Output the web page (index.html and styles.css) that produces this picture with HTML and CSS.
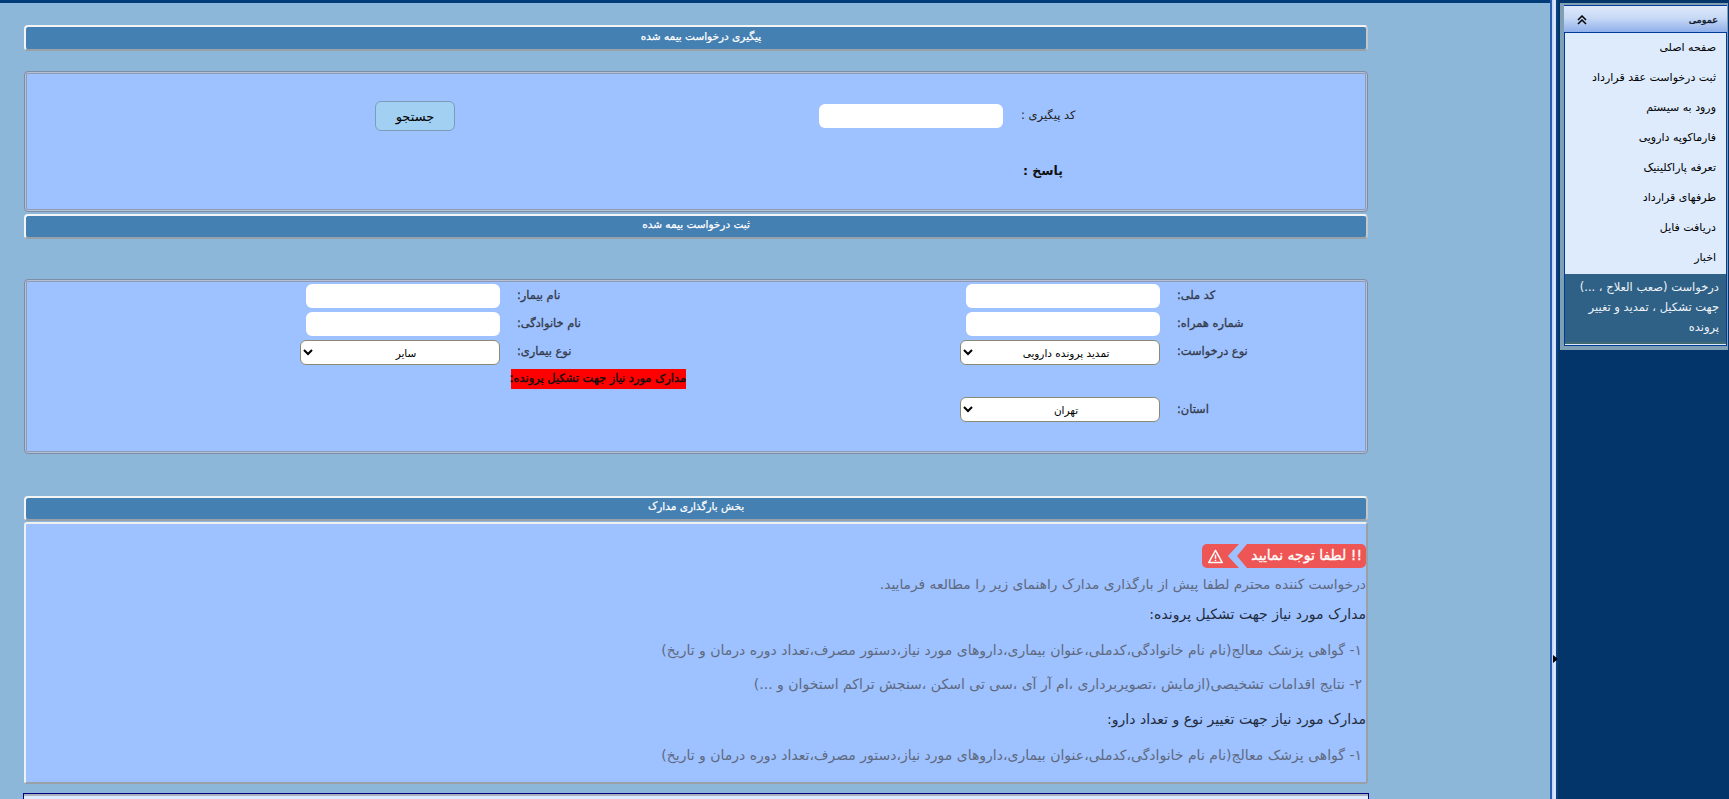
FILE: index.html
```html
<!DOCTYPE html>
<html lang="fa">
<head>
<meta charset="utf-8">
<title>درخواست بیمه شده</title>
<link rel="stylesheet" href="styles.css">
</head>
<body>
<div class="page">
  <main class="main">
    <div class="content">
      <div class="bar bar-first" dir="rtl">پیگیری درخواست بیمه شده</div>
      <section class="panel panel-track">
        <div class="track-row">
          <button class="btn-search" type="button" dir="rtl">جستجو</button>
          <input class="field field-track" type="text">
          <span class="track-label" dir="rtl">کد پیگیری :</span>
        </div>
        <div class="answer" dir="rtl">پاسخ :</div>
      </section>
      <div class="bar bar-second" dir="rtl">ثبت درخواست بیمه شده</div>
      <section class="panel panel-form">
        <input class="field cell-field" type="text">
        <label class="flabel" dir="rtl">نام بیمار:</label>
        <input class="field cell-field" type="text">
        <label class="flabel" dir="rtl">کد ملی:</label>

        <input class="field cell-field" type="text">
        <label class="flabel" dir="rtl">نام خانوادگی:</label>
        <input class="field cell-field" type="text">
        <label class="flabel" dir="rtl">شماره همراه:</label>

        <select class="pick" dir="rtl"><option>سایر</option></select>
        <label class="flabel" dir="rtl">نوع بیماری:</label>
        <select class="pick" dir="rtl"><option>تمدید پرونده دارویی</option></select>
        <label class="flabel" dir="rtl">نوع درخواست:</label>

        <span></span>
        <div class="red-wrap"><span class="red-note" dir="rtl">مدارک مورد نیاز جهت تشکیل پرونده:</span></div>
        <span></span>
        <span></span>

        <span></span>
        <span></span>
        <select class="pick pick-low" dir="rtl"><option>تهران</option></select>
        <label class="flabel flabel-low" dir="rtl">استان:</label>
      </section>
      <div class="bar bar-third" dir="rtl">بخش بارگذاری مدارک</div>
      <section class="panel-docs" dir="rtl">
        <div class="badge">
          <span class="badge-text">!! لطفا توجه نمایید</span>
          <span class="badge-icon" dir="ltr">
            <svg viewBox="0 0 16 16" width="15" height="15"><path d="M8 1.5 15.2 14.5H.8Z" fill="none" stroke="#fff" stroke-width="1.6" stroke-linejoin="round"/><path d="M8 6v4.4M8 11.4v1.5" stroke="#fff" stroke-width="1.6"/></svg>
          </span>
        </div>
        <p class="line note l1">درخواست کننده محترم لطفا پیش از بارگذاری مدارک راهنمای زیر را مطالعه فرمایید.</p>
        <p class="line head l2">مدارک مورد نیاز جهت تشکیل پرونده:</p>
        <p class="line item l3">۱- گواهی پزشک معالج(نام نام خانوادگی،کدملی،عنوان بیماری،داروهای مورد نیاز،دستور مصرف،تعداد دوره درمان و تاریخ)</p>
        <p class="line item l4">۲- نتایج اقدامات تشخیصی(ازمایش ،تصویربرداری ،ام آر آی ،سی تی اسکن ،سنجش تراکم استخوان و ...)</p>
        <p class="line head l5">مدارک مورد نیاز جهت تغییر نوع و تعداد دارو:</p>
        <p class="line item l6">۱- گواهی پزشک معالج(نام نام خانوادگی،کدملی،عنوان بیماری،داروهای مورد نیاز،دستور مصرف،تعداد دوره درمان و تاریخ)</p>
      </section>
      <div class="next-box"></div>
    </div>
  </main>
  <div class="splitter"><span class="split-arrow"></span></div>
  <aside class="side">
    <nav class="menu">
      <div class="menu-head">
        <svg class="menu-chevron" viewBox="0 0 10 10" width="10" height="10"><path d="M1 5 5 1 9 5M1 9 5 5 9 9" fill="none" stroke="#000" stroke-width="1.5"/></svg>
        <span class="menu-title" dir="rtl">عمومی</span>
      </div>
      <a class="menu-item" dir="rtl">صفحه اصلی</a>
      <a class="menu-item" dir="rtl">ثبت درخواست عقد قرارداد</a>
      <a class="menu-item" dir="rtl">ورود به سیستم</a>
      <a class="menu-item" dir="rtl">فارماکوپه دارویی</a>
      <a class="menu-item" dir="rtl">تعرفه پاراکلینیک</a>
      <a class="menu-item" dir="rtl">طرفهای قرارداد</a>
      <a class="menu-item" dir="rtl">دریافت فایل</a>
      <a class="menu-item" dir="rtl">اخبار</a>
      <a class="menu-item menu-active" dir="rtl">درخواست (صعب العلاج ، ...)<br>جهت تشکیل ، تمدید و تغییر<br>پرونده</a>
    </nav>
  </aside>
</div>
</body>
</html>
```
FILE: styles.css
```css
* { box-sizing: border-box; }
html, body { margin: 0; height: 100%; overflow: hidden; }
body { font-family: "DejaVu Sans", sans-serif; color: #000; background: #03356b; }
.page { display: flex; width: 1729px; height: 799px; overflow: hidden; }

.main { width: 1550px; flex: none; height: 799px; background: #8db7d8; border-top: 3px solid #003b7a; padding: 22px 0 0 24px; overflow: hidden; }
.content { width: 1344px; }

.bar { height: 25px; background: #4580b3; color: #fff; font-size: 10.5px; -webkit-text-stroke: 0.25px #fff; text-align: center; line-height: 17px; border: 2px solid; border-color: #f2f4f6 #c4c8cc #9aa0a8 #f2f4f6; border-radius: 4px; }
.bar-first { height: 26px; padding-left: 10px; line-height: 19px; }
.bar-second { margin-top: 2px; }
.bar-third { margin-top: 42px; }

.panel { background: #9ec1ff; border: 1px solid #7f8ca6; border-radius: 4px; box-shadow: inset 0 0 0 1px #b5c0d4, inset 0 0 0 2px #8d9bb8; }
.panel-track { height: 141px; margin-top: 20px; padding-top: 28px; }
.track-row { display: flex; align-items: center; height: 32px; }
.btn-search { width: 80px; height: 30px; margin-left: 350px; background: #a2d0f2; border: 1px solid #7e9cb8; border-radius: 6px; font: 13px "DejaVu Sans", sans-serif; color: #000; padding: 0; }
.field { border: 0; background: #fff; border-radius: 6px; padding: 0; display: block; }
.field-track { width: 184px; height: 24px; margin-left: 364px; }
.track-label { margin: 0 0 2px 18px; font-size: 11.5px; color: #222; }
.answer { margin: 31px 0 0 998px; font-size: 12.5px; font-weight: bold; color: #111; width: 40px; white-space: nowrap; }

.panel-form { height: 175px; margin-top: 40px; padding: 4px 0 0 0; display: grid; grid-template-columns: 475px 460px 200px 1fr; grid-template-rows: 24px 24px 25px 20px 29px; row-gap: 4px; }
.cell-field { width: 194px; height: 24px; justify-self: end; }
.flabel { margin-left: 17px; font-size: 11.4px; -webkit-text-stroke: 0.3px #333a4a; color: #333a4a; justify-self: start; line-height: 22px; white-space: nowrap; }
.flabel-low { align-self: end; line-height: 25px; }
.pick { width: 200px; height: 25px; justify-self: end; background: #fff; border: 1px solid #8a8a70; border-radius: 6px; font: 10.5px "DejaVu Sans", sans-serif; color: #000; text-align: center; text-align-last: center; padding: 0; }
.pick-low { align-self: end; }
.red-wrap { display: flex; margin-left: 11px; }
.red-note { height: 20px; width: 175px; background: #ff0000; color: #111; font-size: 11.4px; -webkit-text-stroke: 0.4px #111; line-height: 19px; white-space: nowrap; text-align: right; }

.panel-docs { height: 262px; margin-top: 1px; background: #9ec1ff; border: 2px solid; border-color: #eef0f2 #9aa0a8 #9aa0a8 #eef0f2; border-radius: 3px; padding-top: 20px; overflow: hidden; }
.badge { display: flex; width: 164px; height: 24px; color: #fff; font-size: 14px; -webkit-text-stroke: 0.3px #fff; }
.badge-text { width: 129px; padding-right: 4px; line-height: 23px; background: #ee5555; border-radius: 0 5px 5px 0; clip-path: polygon(0 50%, 10px 0, 100% 0, 100% 100%, 10px 100%); white-space: nowrap; flex: none; }
.badge-icon { width: 37px; flex: none; display: flex; align-items: center; padding-left: 6px; margin-right: -2px; background: #ee5555; border-radius: 5px 0 0 5px; clip-path: polygon(0 0, 100% 0, 70% 50%, 100% 100%, 0 100%); }
.line { margin: 0; white-space: nowrap; font-size: 14px; line-height: 24px; }
.note { color: #5f6a80; margin-top: 4px; font-size: 13.8px; }
.item { color: #5f6a80; padding-right: 4px; }
.head { color: #222c3c; }
.l2 { margin-top: 6px; }
.l3 { margin-top: 12px; }
.l4 { margin-top: 10px; }
.l5 { margin-top: 11px; }
.l6 { margin-top: 12px; }
.next-box { margin: 9px -1px 0; height: 60px; background: #dcebff; border: 1px solid #00007f; box-shadow: inset 0 2px 0 #a9b2bd; border-bottom: 0; }

.splitter { width: 8px; flex: none; height: 799px; background: linear-gradient(90deg, #2a5db0 0 2px, #bcd0f6 2px, #e4edff 5px, #c4d6f8 6px, #0a4080 6px); padding: 655px 0 0 3px; }
.split-arrow { display: block; width: 0; height: 0; border-style: solid; border-width: 4px 0 4px 5px; border-color: transparent transparent transparent #000; }

.side { width: 171px; flex: none; height: 799px; background: #03356b; padding: 3px 1px 0 2px; }
.menu { height: 347px; border: 2px solid #7f9fb4; border-width: 2px 1px 4px 4px; display: block; background: #ddebfd; box-shadow: inset 0 0 0 1px #003b9a; padding: 1px; }
.menu-head { display: flex; justify-content: space-between; align-items: center; height: 27px; margin: 0 -1px; padding: 0 9px 0 13px; background: linear-gradient(#dce8fb, #c9daf6 45%, #8fb0ea); border-bottom: 1px solid #003b9a; }
.menu-chevron { margin-top: 2px; }
.menu-title { font-size: 9.6px; -webkit-text-stroke: 0.4px #101828; color: #101828; }
.menu-item { display: block; height: 30px; line-height: 29px; padding-right: 10px; font-size: 11px; color: #000; white-space: nowrap; }
.menu-active { height: 70px; margin-top: 1px; padding: 3px 7px 0 0; line-height: 20px; font-size: 11.5px; background: #2f6086; color: #eef3f8; border-bottom: 2px solid #3f6b70; }
```
